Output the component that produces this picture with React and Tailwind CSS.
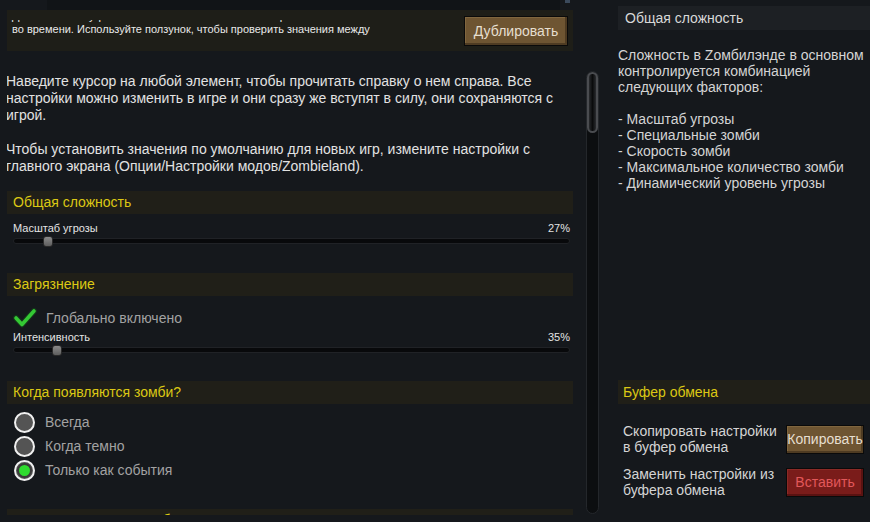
import React from "react";

const font = { fontFamily: '"Liberation Sans", Arial, sans-serif' };

function SectionHeader({ children, className = "" }) {
  return (
    <div className={`flex h-[23px] items-center bg-[#201f18] pl-[6px] text-[14px] text-[#dcc814] ${className}`}>
      {children}
    </div>
  );
}

function Slider({ label, value, thumb }) {
  return (
    <div className="pl-[6px] pr-[3px]">
      <div className="flex h-[13px] items-center justify-between text-[11px] leading-[13px] text-[#e4e4e4]">
        <span>{label}</span>
        <span>{value}</span>
      </div>
      <div className="relative mt-[3px] h-[6px] rounded-full border border-[#202226] bg-[#08090b]">
        <div
          className="absolute top-[-3px] h-[11px] w-[10px] rounded-[3px] border border-[#2a2a2a] bg-gradient-to-b from-[#8a8a8a] to-[#5e5e5e]"
          style={{ left: thumb }}
        />
      </div>
    </div>
  );
}

function Radio({ label, checked }) {
  return (
    <div className="flex h-[24px] items-center">
      <div className="ml-[7px] flex h-[21px] w-[21px] items-center justify-center rounded-full border-2 border-[#f0f0f0] bg-[#545454]">
        {checked && <div className="h-[15px] w-[15px] rounded-full border-2 border-[#3a3a3a] bg-[#2fdc2f]" />}
      </div>
      <span className="ml-[10px] text-[14px] text-[#a2a2a2]">{label}</span>
    </div>
  );
}

function GameButton({ children, red }) {
  return (
    <button
      className={
        red
          ? "h-[29px] w-[78px] shrink-0 border border-[#0a0a0a] bg-[#7a1c1a] text-[14px] text-[#e2585a] shadow-[inset_-2px_-2px_0_#5a1211,inset_1px_1px_0_#8a2a26]"
          : "h-[29px] w-[78px] shrink-0 border border-[#0a0a0a] bg-[#6e5532] text-[14px] text-[#e6dfd0] shadow-[inset_-2px_-2px_0_#4e3b22,inset_1px_1px_0_#80663f]"
      }
    >
      {children}
    </button>
  );
}

function Checkmark() {
  return (
    <svg width="24" height="20" viewBox="0 0 24 20">
      <polyline points="3,10 9,16.5 21,3" fill="none" stroke="#14331a" strokeWidth="6" strokeLinecap="round" strokeLinejoin="round" />
      <polyline points="3,10 9,16.5 21,3" fill="none" stroke="#34c834" strokeWidth="3.6" strokeLinecap="round" strokeLinejoin="round" />
    </svg>
  );
}

export default function App() {
  return (
    <div className="flex h-[522px] w-[870px] overflow-hidden bg-[#15181c]" style={font}>
      {/* left: settings list */}
      <div className="flex items-start pl-[7px]">
        <div className="h-[515px] w-[566px] overflow-hidden">
          <div className="flex h-[10px]">
            <div className="ml-[40px] w-[513px] bg-[#111417]" />
            <div className="ml-[5px] mt-0 h-[3px] w-[5px] bg-[#3b4a5c]" />
          </div>
          <div className="flex h-[41px] items-start justify-between bg-[#1e1e18]">
            <div className="mt-[10px] h-[20px] overflow-hidden pl-[5px]">
              <div className="mt-[-10px] text-[11px] leading-[13px] text-[#e8e8e8]">
                <div>Динамическая угроза меняет количество зомби со временем и</div>
                <div>во времени. Используйте ползунок, чтобы проверить значения между</div>
                <div>днем и ночью в разные моменты игры.</div>
              </div>
            </div>
            <div className="mr-[5px] mt-[6px]">
              <button className="h-[30px] w-[104px] border border-[#0a0a0a] bg-[#6e5532] text-[14px] text-[#e6dfd0] shadow-[inset_-2px_-2px_0_#4e3b22,inset_1px_1px_0_#80663f]">
                Дублировать
              </button>
            </div>
          </div>

          <p className="-ml-px mt-[22px] whitespace-pre-line text-[14px] leading-[17px] text-[#e2e2e2]">
            {"Наведите курсор на любой элемент, чтобы прочитать справку о нем справа. Все настройки можно изменить в игре и они сразу же вступят в силу, они сохраняются с игрой.\n\nЧтобы установить значения по умолчанию для новых игр, измените настройки с главного экрана (Опции/Настройки модов/Zombieland)."}
          </p>

          <SectionHeader className="mt-[16px]">Общая сложность</SectionHeader>
          <div className="mt-[8px]">
            <Slider label="Масштаб угрозы" value="27%" thumb="29px" />
          </div>

          <SectionHeader className="mt-[29px]">Загрязнение</SectionHeader>
          <div className="mt-[11px] flex h-[22px] items-center">
            <div className="ml-[6px]">
              <Checkmark />
            </div>
            <span className="ml-[9px] text-[14px] text-[#a2a2a2]">Глобально включено</span>
          </div>
          <div className="mt-[2px]">
            <Slider label="Интенсивность" value="35%" thumb="38px" />
          </div>

          <SectionHeader className="mt-[28px]">Когда появляются зомби?</SectionHeader>
          <div className="mt-[6px]">
            <Radio label="Всегда" />
            <Radio label="Когда темно" />
            <Radio label="Только как события" checked />
          </div>

          <SectionHeader className="mt-[27px]">Атаки и поведение зомби</SectionHeader>
        </div>

        {/* scrollbar */}
        <div className="ml-[13px] flex h-[514px] w-[13px] flex-col pt-[71px]">
          <div className="flex flex-1 flex-col rounded-full border border-[#24272b] bg-[#0c0e10]">
            <div className="h-[61px] rounded-full border-2 border-[#4a4c50] bg-gradient-to-r from-[#2a2c2f] via-[#0a0b0c] to-[#2a2c2f]" />
          </div>
        </div>
      </div>

      {/* right: help + clipboard */}
      <div className="ml-[19px] flex w-[252px] flex-col">
        <div className="mt-[6px] flex h-[24px] items-center bg-[#1d2024] pl-[7px] text-[14px] text-[#d8d8d8]">
          Общая сложность
        </div>
        <p className="mt-[17px] whitespace-pre-line text-[14px] leading-[16px] text-[#d4d4d4]">
          {"Сложность в Zомбилэнде в основном контролируется комбинацией следующих факторов:\n\n- Масштаб угрозы\n- Специальные зомби\n- Скорость зомби\n- Максимальное количество зомби\n- Динамический уровень угрозы"}
        </p>

        <div className="mt-[189px] flex h-[24px] items-center bg-[#201f18] pl-[5px] text-[14px] text-[#dcc814]">
          Буфер обмена
        </div>
        <div className="mt-[19px] flex items-center justify-between pl-[5px] pr-[6px]">
          <span className="text-[14px] leading-[16px] text-[#d4d4d4]">
            Скопировать настройки
            <br />в буфер обмена
          </span>
          <GameButton>Копировать</GameButton>
        </div>
        <div className="mt-[11px] flex items-center justify-between pl-[5px] pr-[6px]">
          <span className="text-[14px] leading-[16px] text-[#d4d4d4]">
            Заменить настройки из
            <br />
            буфера обмена
          </span>
          <GameButton red>Вставить</GameButton>
        </div>
      </div>
    </div>
  );
}
